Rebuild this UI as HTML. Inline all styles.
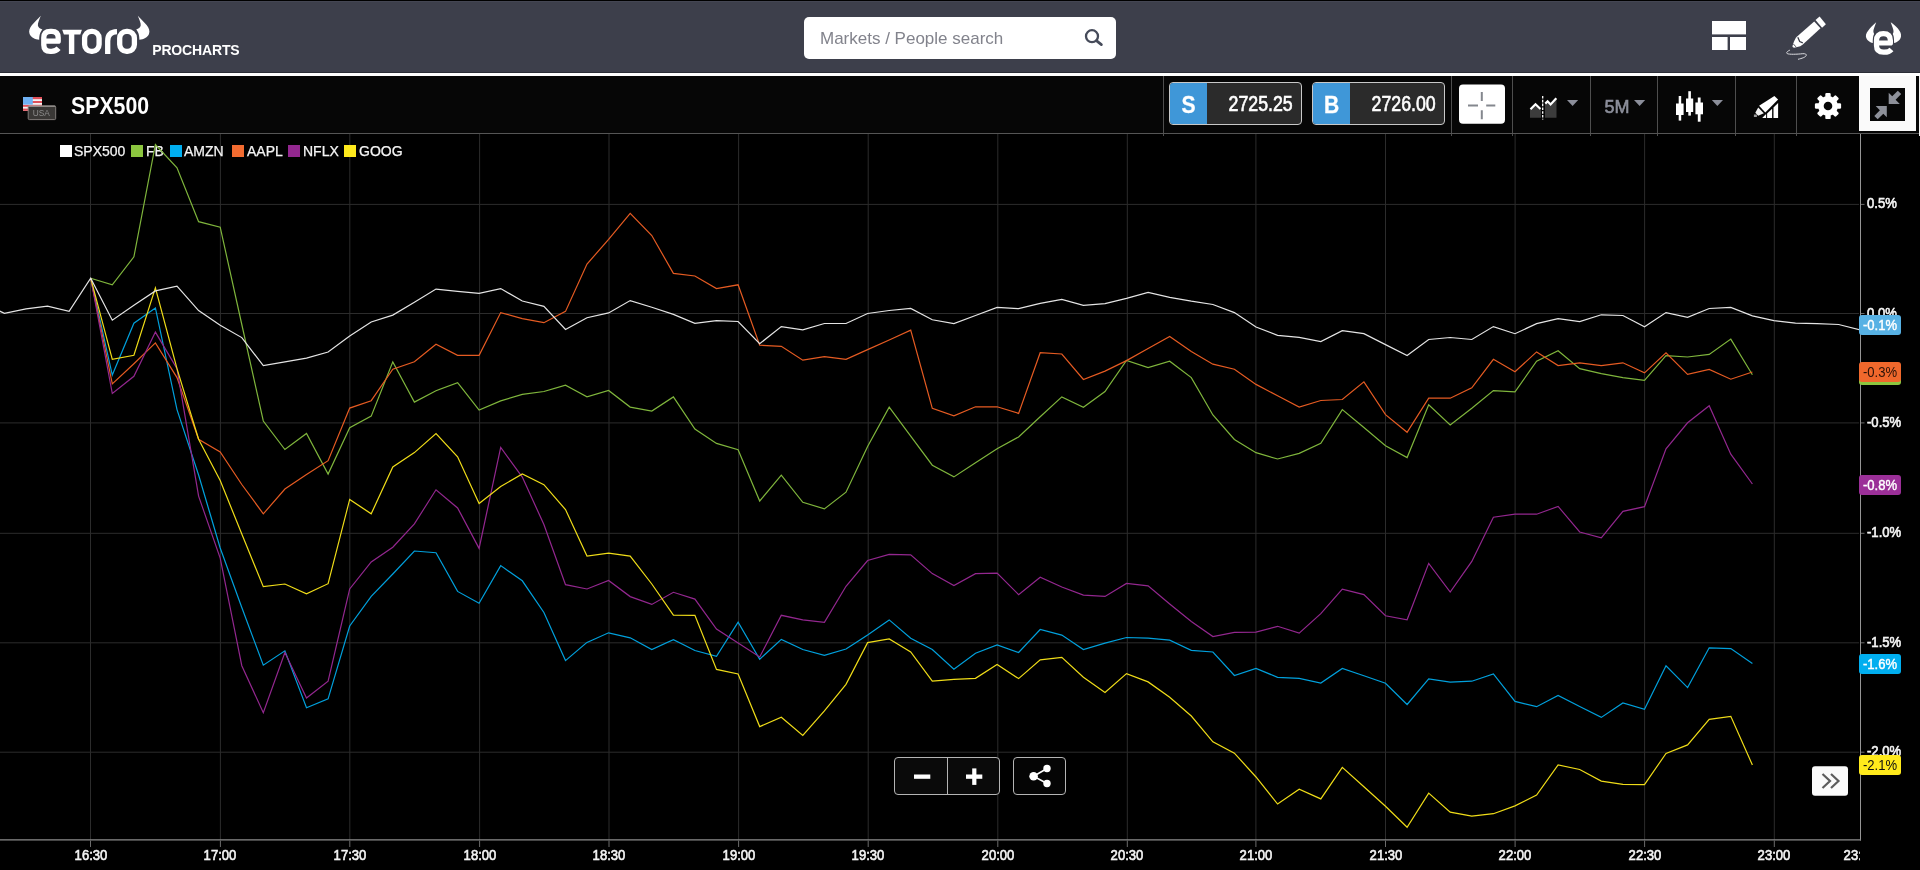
<!DOCTYPE html>
<html><head><meta charset="utf-8"><title>eToro ProCharts</title>
<style>
html,body{margin:0;padding:0;}
body{width:1920px;height:870px;overflow:hidden;background:#000;position:relative;font-family:"Liberation Sans",sans-serif;}
.abs{position:absolute;}
#hdr{left:0;top:0;width:1920px;height:73px;background:#3d3f4b;}
#hdrtop{left:0;top:0;width:1920px;height:1px;background:#000;border-bottom:1px solid #444653;}
#hdrbot{left:0;top:72px;width:1920px;height:1px;background:#2b2d36;}
#wline{left:0;top:73px;width:1920px;height:3px;background:#fff;}
#tb{left:0;top:76px;width:1920px;height:57px;background:#060606;}
#tbline{left:0;top:133px;width:1919px;height:1px;background:#555;}
.sep{position:absolute;top:76px;width:1px;height:60px;background:#4e4e4e;}
#search{left:804px;top:17px;width:312px;height:42px;background:#fff;border-radius:5px;}
#search span{position:absolute;left:16px;top:12px;font-size:17px;line-height:20px;color:#82838c;white-space:nowrap;letter-spacing:0px;}
#pro{left:152.200px;top:41.700px;font-size:14px;line-height:16px;font-weight:bold;color:#fff;white-space:nowrap;letter-spacing:-0.150px;}
#title{left:71px;top:93px;font-size:23px;line-height:26px;font-weight:bold;color:#fff;white-space:nowrap;transform:scaleX(0.925);transform-origin:0 50%;}
.pbtn{position:absolute;top:82px;height:41px;border:1px solid #c8c8c8;border-radius:4px;background:#2b2b2b;overflow:hidden;box-sizing:content-box;}
.pbtn .l{position:absolute;left:0;top:0;width:37px;height:41px;background:#3f97d8;}
.pbtn .l span{position:absolute;left:0;top:0;width:37px;height:41px;color:#fff;font-weight:bold;font-size:24.500px;line-height:43px;text-align:center;transform:scaleX(0.860);-webkit-text-stroke:0.300px #fff;}
.pbtn .v{position:absolute;right:8px;top:0;height:41px;line-height:42px;color:#fff;font-size:21.500px;white-space:nowrap;transform:scaleX(0.826);transform-origin:100% 50%;-webkit-text-stroke:0.650px #fff;}
.lg{position:absolute;top:145px;width:12px;height:12px;}
.lt{position:absolute;top:143px;font-size:14px;line-height:16px;color:#f4f4f4;white-space:nowrap;-webkit-text-stroke:0.250px #f4f4f4;}
.yl{position:absolute;left:1867px;font-size:14px;line-height:14px;color:#f4f4f4;white-space:nowrap;transform:scaleX(0.935);transform-origin:0 50%;-webkit-text-stroke:0.600px #f4f4f4;}
.xl{position:absolute;top:848px;width:60px;text-align:center;font-size:14px;line-height:14px;color:#f4f4f4;white-space:nowrap;transform:scaleX(0.935);-webkit-text-stroke:0.600px #f4f4f4;}
.bd{position:absolute;left:1859px;width:42px;height:20px;border-radius:3px;font-size:14px;line-height:20px;text-align:center;white-space:nowrap;}
.bd span{display:block;transform:scaleX(0.935);}
</style></head><body><div id="root" style="position:absolute;left:0;top:0;width:1920px;height:870px;will-change:transform;">

<div class="abs" id="hdr"></div><div class="abs" id="hdrtop"></div><div class="abs" id="hdrbot"></div><div class="abs" id="wline"></div>
<div class="abs" id="tb"></div>
<svg class="abs" style="left:0;top:0" width="260" height="73" viewBox="0 0 260 73">
<g fill="#fff" stroke="none">
<path d="M40.8 15.7 C39.6 19 37.5 23 37.9 25.6 C38.2 27.6 40 28.8 42.4 29.5 C40.6 31.5 39.3 34.2 39.2 39.8 C35 39.3 31 37.6 29.6 34 C28.5 31 29.6 28 32 25 C35 21.4 38.6 18.4 40.8 15.7 Z"/>
<path d="M137.8 15.7 C139 19 141.1 23 140.7 25.6 C140.4 27.6 138.6 28.8 136.2 29.5 C138 31.5 139.3 34.2 139.4 39.8 C143.6 39.3 147.6 37.6 149 34 C150.1 31 149 28 146.6 25 C143.6 21.4 140 18.4 137.8 15.7 Z"/>
<path d="M62.2 29.8 L81.9 29.8 L80.3 34.4 L74.3 34.4 L74.3 53.9 L68.9 53.9 L68.9 34.4 L63.9 34.4 Z"/>
</g>
<g fill="none" stroke="#fff" stroke-width="5.3" stroke-linejoin="round">
<path d="M58.6 48.3 Q56 51.3 51.5 51.3 L50.3 51.3 Q43.8 51.3 43.8 45 L43.8 37.7 Q43.8 31.4 50.3 31.4 L51.7 31.4 Q58.2 31.4 58.2 37.7 L58.2 41.2 L44.5 41.2"/>
<rect x="84.6" y="31.4" width="14.5" height="19.9" rx="6.8" ry="6.8"/>
<rect x="119.7" y="31.4" width="14.7" height="19.9" rx="6.8" ry="6.8"/>
<path d="M107.7 53.9 L107.7 41 Q107.7 32 117 31.7"/>
</g></svg>
<div class="abs" id="pro">PROCHARTS</div>
<div class="abs" id="search"><span>Markets / People search</span><svg class="abs" style="left:276px;top:9px" width="26" height="26" viewBox="0 0 26 26"><circle cx="12" cy="10.2" r="6" fill="none" stroke="#464b5a" stroke-width="2.300"/><path d="M16.400 14.600 L21.400 18.600" stroke="#464b5a" stroke-width="2.700" stroke-linecap="round"/></svg></div>
<svg class="abs" style="left:1700px;top:0" width="220" height="73" viewBox="1700 0 220 73">
<g fill="#fff">
<rect x="1712" y="21" width="34" height="13.4"/><rect x="1712" y="37" width="15.6" height="13"/><rect x="1730" y="37" width="16" height="13"/>
</g>
<g fill="#fff">
<path d="M1815.500 20.100 L1819.600 16.600 L1825.900 24.200 L1822.100 27.700 Z"/>
<path d="M1814.200 21.400 L1820.500 28.300 L1802.800 44.500 L1800.300 46.300 L1795.200 47.600 Q1792.600 48.200 1792.400 46.300 L1794 41.600 L1795.900 37.800 L1797.100 36.500 Z"/>
</g>
<path d="M1797.800 37.200 L1799.700 41.600 L1802.800 42.900" fill="none" stroke="#3c3e4a" stroke-width="1.300"/>
<path d="M1793.400 44 L1796 46.900" fill="none" stroke="#3c3e4a" stroke-width="0.900"/>
<path d="M1789.900 50.100 C1787.500 51.200 1785.800 52.600 1787.200 53.600 C1789 54.600 1797 54.300 1802.800 53.700 C1805.500 53.500 1806.800 54.400 1806.200 55.600 C1805.500 57.200 1802 58.400 1798 59.300" fill="none" stroke="#dcdce0" stroke-width="1"/>
<g fill="#fff">
<path d="M1876.2 22.2 C1875 26 1873 29.5 1873.4 32.1 C1873.6 33 1874.1 33.6 1874.1 34.1 C1873.2 36 1872.8 37.5 1872.8 42.9 C1869.5 42.5 1866.5 40 1865.9 36.5 C1865.6 33.8 1867.6 31.3 1869.6 28.8 C1872 25.8 1874.6 23.6 1876.2 22.2 Z"/>
<path d="M 1890.70 22.2 C 1891.90 26 1893.90 29.5 1893.50 32.1 C 1893.30 33 1892.80 33.6 1892.80 34.1 C 1893.70 36 1894.10 37.5 1894.10 42.9 C 1897.40 42.5 1900.40 40 1901.00 36.5 C 1901.40 33.5 1899.90 31 1897.90 28.5 C 1895.40 25.5 1892.40 23.5 1890.70 22.2 Z"/>
</g>
<path d="M1891.500 49.400 Q1889 52.200 1884.500 52.200 L1883.500 52.200 Q1876.500 52.200 1876.500 45.500 L1876.500 40.500 Q1876.500 33.600 1883.450 33.600 Q1890.400 33.600 1890.400 40.500 L1890.400 43 L1877 43" fill="none" stroke="#fff" stroke-width="5.200" stroke-linejoin="round"/>
</svg>
<div class="sep" style="left:1163px"></div>
<div class="sep" style="left:1451px"></div>
<div class="sep" style="left:1512px"></div>
<div class="sep" style="left:1590px"></div>
<div class="sep" style="left:1657px"></div>
<div class="sep" style="left:1735px"></div>
<div class="sep" style="left:1796px"></div>
<div class="abs" id="tbline"></div>
<div class="abs" style="left:1919px;top:76px;width:1px;height:60px;background:#f2f2f2"></div>
<svg class="abs" style="left:20px;top:92px" width="40" height="32" viewBox="20 92 40 32">
<rect x="23" y="97" width="19" height="14" fill="#f3f3f3"/>
<g fill="#e0505a"><rect x="23" y="97" width="19" height="2.2"/><rect x="23" y="101" width="19" height="2"/><rect x="23" y="104.800" width="19" height="2"/><rect x="23" y="108.600" width="19" height="2.200"/></g>
<rect x="23" y="97" width="9.800" height="7.600" fill="#6fb0f2"/>
<rect x="28.200" y="106" width="27.500" height="13.600" rx="1.200" fill="#3a3836" stroke="#8a8683" stroke-width="0.900"/>
<path d="M28.600 106.100 L55.300 106.100" stroke="#c4c0bd" stroke-width="0.800"/><text x="41.200" y="116.400" font-family="Liberation Sans, sans-serif" font-size="8.300" fill="#8d8d8d" text-anchor="middle">USA</text>
</svg>
<div class="abs" id="title">SPX500</div>
<div class="pbtn" style="left:1169px;width:131px"><div class="l"><span>S</span></div><div class="v">2725.25</div></div>
<div class="pbtn" style="left:1312px;width:131px"><div class="l"><span>B</span></div><div class="v">2726.00</div></div>
<svg class="abs" style="left:1455px;top:80px" width="56" height="48" viewBox="1455 80 56 48">
<rect x="1459" y="84.600" width="46" height="39.200" rx="4" fill="#fff"/>
<g stroke="#84878e" stroke-width="2"><path d="M1481.800 92 L1481.800 101 M1481.800 110.200 L1481.800 119.300 M1468 105.500 L1478 105.500 M1486.200 105.500 L1495.300 105.500"/></g>
</svg>
<svg class="abs" style="left:1513px;top:76px" width="407" height="58" viewBox="1513 76 407 58">
<!-- compare -->
<g><path d="M1530 109.500 L1535.500 104.500 L1541 109.300 L1541 117.700 L1530 117.700 Z" fill="#3c3c3c"/>
<path d="M1545 103.500 L1547.600 101 L1550.600 104.200 L1556.500 98 L1556.500 117.700 L1545 117.700 Z" fill="#3c3c3c"/>
<path d="M1530.500 109.300 L1535.500 104.300 L1540.500 109" fill="none" stroke="#fff" stroke-width="2.200"/>
<path d="M1545.300 103.600 L1547.600 101.300 L1550.600 104.500 L1556.300 98.300" fill="none" stroke="#fff" stroke-width="2.200"/>
<path d="M1542.700 96 L1542.700 119.500" stroke="#fff" stroke-width="1.300" stroke-dasharray="2.600 1.200"/></g>
<g fill="#8b8e9a"><path d="M1567 100 L1578.200 100 L1572.600 106 Z"/><path d="M1634 100 L1645.200 100 L1639.600 106 Z"/><path d="M1711.800 100 L1723 100 L1717.400 106 Z"/></g>
<!-- candles -->
<g fill="#fff"><rect x="1676" y="103.500" width="7.600" height="11.500"/><rect x="1678.700" y="96" width="2.500" height="24.600"/>
<rect x="1686" y="98.500" width="7.200" height="13.500"/><rect x="1688.300" y="91.200" width="2.600" height="24.400"/>
<rect x="1695.400" y="102.500" width="7.600" height="11.800"/><rect x="1697.800" y="97.500" width="2.800" height="24.200"/></g>
<!-- draw icon -->
<g fill="#fff">
<path d="M1773.500 107.400 L1778.100 102.900 L1778.100 118 L1773.500 118 Z"/>
<path d="M1767.100 113.600 L1772.100 108.700 L1772.100 118 L1767.100 118 Z"/>
<path d="M1762.400 117.800 L1766.100 114 L1766.100 118 L1762.400 118 Z"/>
<path d="M1759.100 105.800 L1774.400 95.900 L1778.100 99.600 L1765.300 112.400 Z"/>
<path d="M1758.200 107.400 L1763.800 113.200 L1758.200 115.700 L1755.300 112.800 Z" fill="#f2f2f2"/>
<rect x="1753.900" y="114.500" width="3" height="2.500" fill="#9a9a9a"/>
</g>
<!-- gear -->
<g transform="translate(1828 106)">
<g fill="#fff"><circle r="9.900"/>
<g id="t"><rect x="-2.700" y="-13.100" width="5.400" height="26.200" rx="1.200"/></g>
<use href="#t" transform="rotate(45)"/><use href="#t" transform="rotate(90)"/><use href="#t" transform="rotate(135)"/></g>
<circle r="4.300" fill="#060606"/></g>
<!-- collapse -->
<rect x="1859" y="76" width="57" height="55" fill="#fafafa"/>
<rect x="1870" y="88" width="35" height="33" fill="#060606"/>
<g fill="#8d9099">
<path d="M1888.700 92.800 L1892.200 96.300 L1897.800 90.700 L1901.200 94.100 L1895.600 99.700 L1899.800 103.900 L1888.700 103.900 Z"/>
<path d="M1886.800 117.200 L1883.300 113.700 L1877.700 119.300 L1874.300 115.900 L1879.900 110.300 L1875.700 106.100 L1886.800 106.100 Z"/>
</g>
</svg>
<div class="abs" style="left:1604.500px;top:96.500px;font-size:18px;line-height:20px;color:#8b8e9a;font-weight:normal;-webkit-text-stroke:0.600px #8b8e9a;">5M</div>
<svg class="abs" style="left:0;top:134px" width="1920" height="736" viewBox="0 134 1920 736">
<g stroke="#2c2c2c" stroke-width="1">
<path d="M90.5 134 L90.5 840"/>
<path d="M220.4 134 L220.4 840"/>
<path d="M349.8 134 L349.8 840"/>
<path d="M479.6 134 L479.6 840"/>
<path d="M609.0 134 L609.0 840"/>
<path d="M738.6 134 L738.6 840"/>
<path d="M868.2 134 L868.2 840"/>
<path d="M997.8 134 L997.8 840"/>
<path d="M1127.3 134 L1127.3 840"/>
<path d="M1255.9 134 L1255.9 840"/>
<path d="M1385.5 134 L1385.5 840"/>
<path d="M1515.1 134 L1515.1 840"/>
<path d="M1644.6 134 L1644.6 840"/>
<path d="M1774.3 134 L1774.3 840"/>
<path d="M0 204.4 L1859 204.4"/>
<path d="M0 313.5 L1859 313.5"/>
<path d="M0 422.9 L1859 422.9"/>
<path d="M0 533.3 L1859 533.3"/>
<path d="M0 642.8 L1859 642.8"/>
<path d="M0 752.2 L1859 752.2"/>
</g>
</svg>
<div class="lg" style="left:60px;background:#fff"></div><div class="lt" style="left:74px">SPX500</div>
<div class="lg" style="left:131px;background:#8cc63f"></div><div class="lt" style="left:146px">FB</div>
<div class="lg" style="left:170px;background:#00aeef"></div><div class="lt" style="left:184px">AMZN</div>
<div class="lg" style="left:232px;background:#f26b30"></div><div class="lt" style="left:247px">AAPL</div>
<div class="lg" style="left:288px;background:#93278f"></div><div class="lt" style="left:303px">NFLX</div>
<div class="lg" style="left:344px;background:#ffea1c"></div><div class="lt" style="left:359px">GOOG</div>
<svg class="abs" style="left:0;top:134px" width="1920" height="736" viewBox="0 134 1920 736">
<clipPath id="cp"><rect x="0" y="134" width="1860" height="706"/></clipPath>
<g fill="none" stroke-width="1.200" stroke-linejoin="miter" clip-path="url(#cp)">
<polyline stroke="#7fb53c" points="90.7,278.2 112.3,284.9 133.9,256.8 155.4,144.5 177.0,167.8 198.6,221.7 220.2,227.2 241.8,324.5 263.3,421.0 284.9,449.5 306.5,433.5 328.1,474.1 349.7,427.7 371.2,416.1 392.8,361.9 414.4,402.1 436.0,390.7 457.6,382.6 479.1,410.0 500.7,400.9 522.3,394.4 543.9,391.5 565.5,385.2 587.0,396.9 608.6,390.5 630.2,407.1 651.8,411.0 673.4,396.9 694.9,429.0 716.5,443.4 738.1,449.7 759.7,501.0 781.3,475.2 802.8,502.3 824.4,508.9 846.0,492.2 867.6,446.5 889.2,407.1 910.7,436.1 932.3,465.2 953.9,476.9 975.5,462.7 997.1,448.8 1018.6,436.9 1040.2,416.7 1061.8,396.9 1083.4,407.3 1105.0,391.5 1126.5,360.4 1148.1,367.5 1169.7,361.2 1191.3,377.6 1212.9,415.0 1234.4,439.5 1256.0,452.7 1277.6,459.0 1299.2,453.4 1320.8,443.2 1342.3,409.6 1363.9,427.5 1385.5,445.7 1407.1,457.6 1428.7,404.8 1450.2,425.0 1471.8,408.3 1493.4,390.6 1515.0,391.9 1536.6,361.1 1558.1,350.7 1579.7,368.6 1601.3,373.7 1622.9,377.7 1644.5,380.3 1666.0,355.7 1687.6,357.0 1709.2,354.4 1730.8,339.1 1752.4,374.8"/>
<polyline stroke="#00a0dc" points="90.7,278.2 112.3,375.1 133.9,323.2 155.4,308.0 177.0,409.6 198.6,475.0 220.2,548.0 241.8,607.5 263.3,665.2 284.9,650.8 306.5,707.7 328.1,698.8 349.7,626.0 371.2,596.4 392.8,574.0 414.4,551.0 436.0,552.7 457.6,591.4 479.1,603.3 500.7,565.6 522.3,580.8 543.9,612.5 565.5,660.6 587.0,642.4 608.6,632.8 630.2,637.8 651.8,649.5 673.4,639.6 694.9,650.5 716.5,656.3 738.1,622.2 759.7,659.2 781.3,639.4 802.8,649.5 824.4,655.3 846.0,649.0 867.6,635.1 889.2,619.9 910.7,638.3 932.3,649.5 953.9,669.2 975.5,653.3 997.1,644.9 1018.6,652.5 1040.2,629.5 1061.8,635.1 1083.4,649.5 1105.0,643.2 1126.5,637.5 1148.1,638.1 1169.7,640.2 1191.3,650.3 1212.9,652.0 1234.4,675.5 1256.0,668.5 1277.6,677.3 1299.2,678.3 1320.8,683.1 1342.3,668.4 1363.9,675.8 1385.5,683.3 1407.1,704.5 1428.7,678.9 1450.2,682.1 1471.8,681.2 1493.4,674.0 1515.0,701.4 1536.6,706.7 1558.1,695.4 1579.7,706.5 1601.3,717.4 1622.9,702.9 1644.5,709.3 1666.0,665.8 1687.6,687.6 1709.2,647.8 1730.8,648.6 1752.4,663.5"/>
<polyline stroke="#e55b22" points="90.7,278.2 112.3,383.9 133.9,363.7 155.4,342.9 177.0,377.6 198.6,439.3 220.2,452.0 241.8,484.5 263.3,513.8 284.9,489.0 306.5,474.6 328.1,460.7 349.7,408.1 371.2,400.7 392.8,369.2 414.4,361.7 436.0,344.2 457.6,355.3 479.1,355.3 500.7,312.6 522.3,318.6 543.9,322.7 565.5,311.4 587.0,264.0 608.6,239.3 630.2,213.3 651.8,235.5 673.4,273.4 694.9,276.0 716.5,288.6 738.1,284.8 759.7,345.2 781.3,346.3 802.8,360.2 824.4,356.6 846.0,359.4 867.6,349.6 889.2,340.0 910.7,330.2 932.3,408.3 953.9,415.9 975.5,406.8 997.1,406.8 1018.6,413.4 1040.2,352.7 1061.8,354.0 1083.4,379.5 1105.0,371.1 1126.5,360.6 1148.1,348.5 1169.7,336.4 1191.3,351.5 1212.9,364.2 1234.4,369.2 1256.0,384.4 1277.6,395.8 1299.2,407.0 1320.8,400.5 1342.3,399.5 1363.9,381.8 1385.5,414.6 1407.1,432.3 1428.7,398.2 1450.2,398.2 1471.8,387.8 1493.4,359.3 1515.0,371.7 1536.6,351.9 1558.1,365.6 1579.7,362.8 1601.3,365.6 1622.9,362.8 1644.5,372.9 1666.0,352.9 1687.6,374.4 1709.2,369.4 1730.8,379.2 1752.4,372.0"/>
<polyline stroke="#93278f" points="90.7,278.2 112.3,393.5 133.9,376.3 155.4,332.1 177.0,368.7 198.6,496.1 220.2,558.1 241.8,665.7 263.3,712.7 284.9,652.5 306.5,698.0 328.1,681.1 349.7,588.9 371.2,561.9 392.8,547.2 414.4,523.9 436.0,489.8 457.6,508.0 479.1,548.4 500.7,447.4 522.3,477.1 543.9,524.6 565.5,584.7 587.0,589.0 608.6,580.4 630.2,596.6 651.8,604.4 673.4,592.3 694.9,599.1 716.5,629.0 738.1,643.0 759.7,657.0 781.3,615.3 802.8,619.9 824.4,622.4 846.0,586.3 867.6,560.5 889.2,554.4 910.7,554.9 932.3,573.6 953.9,585.5 975.5,573.6 997.1,573.1 1018.6,594.6 1040.2,577.2 1061.8,587.0 1083.4,595.1 1105.0,596.4 1126.5,583.4 1148.1,585.9 1169.7,604.0 1191.3,621.4 1212.9,636.6 1234.4,632.3 1256.0,632.1 1277.6,626.3 1299.2,633.1 1320.8,613.6 1342.3,589.1 1363.9,594.6 1385.5,615.8 1407.1,619.8 1428.7,563.4 1450.2,592.0 1471.8,561.4 1493.4,517.2 1515.0,514.1 1536.6,514.2 1558.1,506.4 1579.7,532.0 1601.3,537.8 1622.9,511.3 1644.5,506.7 1666.0,448.8 1687.6,422.8 1709.2,405.7 1730.8,454.2 1752.4,484.0"/>
<polyline stroke="#efdc18" points="90.7,278.2 112.3,359.4 133.9,355.3 155.4,287.8 177.0,368.7 198.6,439.3 220.2,480.5 241.8,534.0 263.3,586.7 284.9,584.0 306.5,593.8 328.1,583.7 349.7,499.4 371.2,513.8 392.8,467.0 414.4,452.6 436.0,433.5 457.6,456.8 479.1,503.5 500.7,486.5 522.3,474.0 543.9,484.7 565.5,509.5 587.0,556.0 608.6,553.1 630.2,556.1 651.8,584.0 673.4,615.1 694.9,615.3 716.5,669.4 738.1,673.9 759.7,726.6 781.3,717.2 802.8,735.5 824.4,710.9 846.0,684.4 867.6,642.6 889.2,638.9 910.7,652.0 932.3,681.1 953.9,679.3 975.5,678.3 997.1,664.4 1018.6,678.6 1040.2,659.8 1061.8,657.3 1083.4,677.3 1105.0,692.5 1126.5,673.6 1148.1,681.9 1169.7,697.3 1191.3,716.0 1212.9,741.8 1234.4,753.2 1256.0,777.0 1277.6,804.0 1299.2,789.3 1320.8,798.9 1342.3,767.3 1363.9,786.8 1385.5,806.3 1407.1,827.2 1428.7,793.1 1450.2,812.1 1471.8,816.2 1493.4,813.7 1515.0,805.9 1536.6,795.0 1558.1,764.9 1579.7,769.5 1601.3,781.1 1622.9,784.4 1644.5,784.6 1666.0,753.5 1687.6,744.9 1709.2,719.4 1730.8,716.3 1752.4,764.9"/>
<polyline stroke="#e4e4e4" points="-17.2,303.0 4.4,313.4 26.0,308.9 47.5,306.1 69.1,311.3 90.7,278.2 112.3,320.2 133.9,305.3 155.4,290.9 177.0,286.1 198.6,310.6 220.2,325.2 241.8,337.6 263.3,365.7 284.9,361.9 306.5,358.1 328.1,352.0 349.7,335.9 371.2,322.0 392.8,315.1 414.4,302.2 436.0,289.1 457.6,291.4 479.1,293.4 500.7,288.6 522.3,301.0 543.9,306.3 565.5,329.5 587.0,317.7 608.6,312.9 630.2,300.6 651.8,307.3 673.4,314.4 694.9,323.3 716.5,320.7 738.1,321.5 759.7,343.7 781.3,326.6 802.8,329.8 824.4,323.5 846.0,323.5 867.6,313.5 889.2,310.5 910.7,308.4 932.3,319.8 953.9,323.6 975.5,315.5 997.1,307.4 1018.6,308.7 1040.2,303.4 1061.8,299.3 1083.4,305.4 1105.0,303.7 1126.5,298.4 1148.1,292.4 1169.7,297.4 1191.3,301.2 1212.9,304.5 1234.4,312.6 1256.0,327.0 1277.6,335.4 1299.2,337.3 1320.8,341.6 1342.3,330.7 1363.9,333.7 1385.5,344.6 1407.1,355.5 1428.7,339.5 1450.2,337.5 1471.8,339.5 1493.4,326.6 1515.0,333.7 1536.6,323.6 1558.1,318.6 1579.7,321.6 1601.3,314.8 1622.9,315.5 1644.5,326.8 1666.0,312.6 1687.6,317.4 1709.2,308.5 1730.8,307.4 1752.4,315.9 1773.9,320.7 1795.5,323.2 1817.1,323.7 1838.7,324.5 1860.3,330.0"/>
</g>
<g stroke="#959595" stroke-width="1"><path d="M1860.500 134 L1860.500 840.500"/><path d="M0 839.900 L1861 839.900" stroke="#8c8c8c" stroke-width="1.200"/></g>
<g stroke="#6c6c6c" stroke-width="1">
<path d="M90.5 840.500 L90.5 847"/>
<path d="M220.4 840.500 L220.4 847"/>
<path d="M349.8 840.500 L349.8 847"/>
<path d="M479.6 840.500 L479.6 847"/>
<path d="M609.0 840.500 L609.0 847"/>
<path d="M738.6 840.500 L738.6 847"/>
<path d="M868.2 840.500 L868.2 847"/>
<path d="M997.8 840.500 L997.8 847"/>
<path d="M1127.3 840.500 L1127.3 847"/>
<path d="M1255.9 840.500 L1255.9 847"/>
<path d="M1385.5 840.500 L1385.5 847"/>
<path d="M1515.1 840.500 L1515.1 847"/>
<path d="M1644.6 840.500 L1644.6 847"/>
<path d="M1774.3 840.500 L1774.3 847"/>
<path d="M1861 204.4 L1864.500 204.4"/>
<path d="M1861 313.5 L1864.500 313.5"/>
<path d="M1861 422.9 L1864.500 422.9"/>
<path d="M1861 533.3 L1864.500 533.3"/>
<path d="M1861 642.8 L1864.500 642.8"/>
<path d="M1861 752.2 L1864.500 752.2"/>
</g>
</svg>
<div class="yl" style="top:196px">0.5%</div>
<div class="yl" style="top:306px">0.0%</div>
<div class="yl" style="top:415px">-0.5%</div>
<div class="yl" style="top:525px">-1.0%</div>
<div class="yl" style="top:635px">-1.5%</div>
<div class="yl" style="top:744px">-2.0%</div>
<div class="xl" style="left:60.5px">16:30</div>
<div class="xl" style="left:190.4px">17:00</div>
<div class="xl" style="left:319.8px">17:30</div>
<div class="xl" style="left:449.6px">18:00</div>
<div class="xl" style="left:579.0px">18:30</div>
<div class="xl" style="left:708.6px">19:00</div>
<div class="xl" style="left:838.2px">19:30</div>
<div class="xl" style="left:967.8px">20:00</div>
<div class="xl" style="left:1097.3px">20:30</div>
<div class="xl" style="left:1225.9px">21:00</div>
<div class="xl" style="left:1355.5px">21:30</div>
<div class="xl" style="left:1485.1px">22:00</div>
<div class="xl" style="left:1614.6px">22:30</div>
<div class="xl" style="left:1744.3px">23:00</div>
<div class="abs" style="left:1830px;top:842px;width:30px;height:28px;overflow:hidden"><div class="xl" style="left:-0.300px;top:6px">23:20</div></div>
<div class="bd" style="top:315px;background:#57b1e4;color:#fff;-webkit-text-stroke:0.400px #fff"><span>-0.1%</span></div>
<div class="bd" style="top:365px;background:#8cc63f;color:#222"><span>-0.3%</span></div>
<div class="bd" style="top:362px;background:#f0682c;color:#2a1208"><span>-0.3%</span></div>
<div class="bd" style="top:475px;background:#9b2f98;color:#fff;-webkit-text-stroke:0.400px #fff"><span>-0.8%</span></div>
<div class="bd" style="top:654px;background:#00aeef;color:#fff;-webkit-text-stroke:0.400px #fff"><span>-1.6%</span></div>
<div class="bd" style="top:755px;background:#ffea1c;color:#111"><span>-2.1%</span></div>
<svg class="abs" style="left:890px;top:752px" width="184" height="48" viewBox="890 752 184 48">
<rect x="894.500" y="757.500" width="105" height="37" rx="3.500" fill="#0a0a0a" stroke="#b4b4b4" stroke-width="1"/>
<path d="M947.500 757.500 L947.500 794.500" stroke="#b4b4b4" stroke-width="1"/>
<rect x="1013.500" y="757.500" width="52" height="37" rx="3.500" fill="#050505" stroke="#b4b4b4" stroke-width="1"/>
<g fill="#fff"><rect x="914" y="774.500" width="16.300" height="4.300"/><rect x="966" y="774.500" width="16.300" height="4.300"/><rect x="972.200" y="768.400" width="4.200" height="16.500"/>
<circle cx="1033.600" cy="776.200" r="4.300"/><circle cx="1047" cy="768.500" r="3.700"/><circle cx="1047" cy="783.500" r="3.700"/></g>
<path d="M1047 768.500 L1033.600 776.200 L1047 783.500" fill="none" stroke="#fff" stroke-width="1.600"/>
</svg>
<svg class="abs" style="left:1810px;top:764px" width="42" height="36" viewBox="1810 764 42 36">
<rect x="1812" y="766.200" width="36" height="29.600" rx="3" fill="#fafafa"/>
<path d="M1822.500 774 L1830 781 L1822.500 788 M1831 774 L1838.500 781 L1831 788" fill="none" stroke="#5c5c5c" stroke-width="2.200"/>
</svg>
</div></body></html>
